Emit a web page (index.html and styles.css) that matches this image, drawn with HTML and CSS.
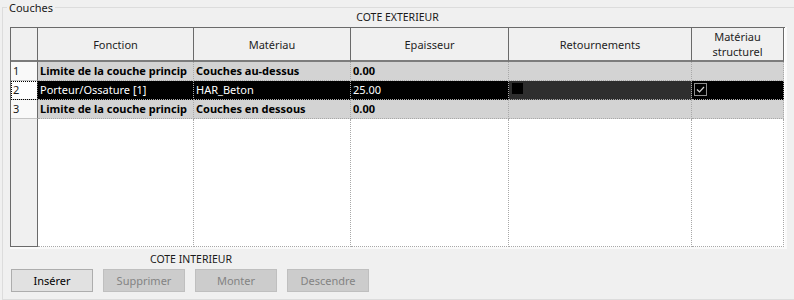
FILE: index.html
```html
<!DOCTYPE html>
<html lang="fr">
<head>
    <meta charset="UTF-8">
    <title>Couches</title>
    <link rel="stylesheet" href="styles.css">
</head>
<body>
    <div class="group">
        <span class="group-title">Couches</span>
        <div class="side-label">COTE EXTERIEUR</div>
        <div class="grid-frame">
            <div class="grid">
                <div class="hd corner"></div>
                <div class="hd">Fonction</div>
                <div class="hd">Matériau</div>
                <div class="hd">Epaisseur</div>
                <div class="hd">Retournements</div>
                <div class="hd">Matériau<br>structurel</div>

                <div class="num">1</div>
                <div class="cell locked">Limite de la couche princip</div>
                <div class="cell locked">Couches au-dessus</div>
                <div class="cell locked">0.00</div>
                <div class="cell locked"></div>
                <div class="cell locked"></div>

                <div class="num focus">2</div>
                <div class="cell sel">Porteur/Ossature [1]</div>
                <div class="cell sel">HAR_Beton</div>
                <div class="cell sel">25.00</div>
                <div class="cell sel dim"><span class="swatch"></span></div>
                <div class="cell sel">
                    <svg class="check" width="13" height="13" viewBox="0 0 13 13">
                        <rect x="0.5" y="0.5" width="12" height="12" fill="#000" stroke="#8f8f8f"/>
                        <polyline points="3,6.5 5.5,9 10,4" fill="none" stroke="#d0d0d0" stroke-width="1.2"/>
                    </svg>
                </div>

                <div class="num">3</div>
                <div class="cell locked">Limite de la couche princip</div>
                <div class="cell locked">Couches en dessous</div>
                <div class="cell locked">0.00</div>
                <div class="cell locked"></div>
                <div class="cell locked"></div>

                <div class="num empty"></div>
                <div class="cell"></div>
                <div class="cell"></div>
                <div class="cell"></div>
                <div class="cell"></div>
                <div class="cell"></div>
            </div>
        </div>
        <div class="bottom">
            <div class="side-label">COTE INTERIEUR</div>
            <div class="buttons">
                <button class="btn">Insérer</button>
                <button class="btn" disabled>Supprimer</button>
                <button class="btn" disabled>Monter</button>
                <button class="btn" disabled>Descendre</button>
            </div>
        </div>
    </div>
</body>
</html>
```

FILE: styles.css
```css
body {
    margin: 0;
    background: #f0f0f0;
    font-family: "Noto Sans", "Open Sans", sans-serif;
    font-size: 11px;
    color: #000;
    overflow: hidden;
}
.group {
    position: relative;
    margin: 7px 0 0 2px;
    width: 800px;
    height: 291px;
    border: 1px solid #dcdcdc;
    padding: 0 0 0 7px;
}
.group-title {
    position: absolute;
    top: -7px;
    left: 4px;
    padding: 0 2px;
    background: #f0f0f0;
    line-height: 13px;
    color: #1a1a1a;
}
.side-label {
    height: 19px;
    line-height: 19px;
    text-align: center;
    width: 775px;
    font-size: 10.5px;
    color: #1a1a1a;
}
.grid-frame {
    width: 775px;
    border-right: 2px solid #fafafa;
    border-bottom: 2px solid #fafafa;
}
.grid {
    display: grid;
    grid-template-columns: 27px 156px 157px 158px 183px 92px;
    grid-template-rows: 34px 19px 19px 19px 128px;
    border-left: 1px solid #6a6a6a;
    border-top: 1px solid #6a6a6a;
    background: #fff;
}
.grid > div {
    box-sizing: border-box;
    white-space: nowrap;
    overflow: hidden;
}
.hd {
    display: flex;
    align-items: center;
    justify-content: center;
    text-align: center;
    line-height: 15px;
    background: #f0f0f0;
    color: #1e1e1e;
    border-right: 1px solid #6a6a6a;
    border-bottom: 2px solid #7c7c7c;
}
.num {
    background: #f9f9f9;
    border-right: 1px solid #6a6a6a;
    border-bottom: 1px solid #c4c4c4;
    padding-left: 2px;
    line-height: 18px;
    color: #1a1a1a;
}
.num.focus {
    background: #fff;
    outline: 1px dotted #000;
    outline-offset: -1px;
}
.num.empty {
    background: #f0f0f0;
    border-bottom: 1px solid #6a6a6a;
}
.cell {
    border-right: 1px dotted #a8a8a8;
    border-bottom: 1px dotted #a8a8a8;
    padding-left: 2px;
    line-height: 18px;
}
.locked {
    background: #d3d3d3;
    font-weight: bold;
}
.sel {
    background: #000;
    color: #fff;
}
.sel.dim {
    background: #2e2e2e;
}
.swatch {
    display: block;
    width: 11px;
    height: 11px;
    margin: 2px 0 0 1px;
    background: #000;
}
.check {
    display: block;
    margin: 2px 0 0 0;
}
.bottom {
    width: 360px;
    padding-left: 1px;
}
.bottom .side-label {
    width: 360px;
    margin-top: 1px;
}
.buttons {
    display: flex;
    gap: 10px;
}
.btn {
    width: 82px;
    height: 23px;
    padding: 0;
    font-family: inherit;
    font-size: 11px;
    color: #000;
    background: #e1e1e1;
    border: 1px solid #adadad;
    border-radius: 0;
}
.btn:disabled {
    background: #cccccc;
    border-color: #bfbfbf;
    color: #838383;
}
```
